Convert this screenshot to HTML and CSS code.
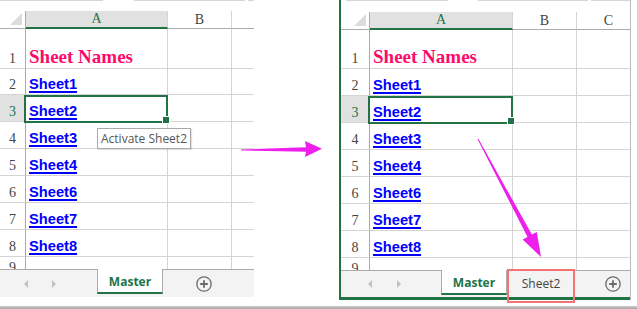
FILE: index.html
```html
<!DOCTYPE html>
<html lang="en">
<head>
    <meta charset="UTF-8">
    <title>Activate sheet from hyperlink</title>
    <link rel="stylesheet" href="styles.css">
</head>
<body>
    <div class="stage">
        <!-- before: hovering the link in Master -->
        <div class="book book-left">
            <div class="topline">
                <span class="seg seg-1"></span><span class="seg seg-2"></span><span class="seg seg-3"></span>
            </div>
            <div class="grid">
                <div class="corner"><span class="tri"></span></div>
                <div class="colhead sel">A</div>
                <div class="colhead">B</div>
                <div class="colhead"></div>

                <div class="rh">1</div><div class="c"><span class="title">Sheet Names</span></div><div class="c"></div><div class="c"></div>
                <div class="rh">2</div><div class="c"><span class="link">Sheet1</span></div><div class="c"></div><div class="c"></div>
                <div class="rh sel">3</div><div class="c sel-cell"><span class="link">Sheet2</span></div><div class="c"></div><div class="c"></div>
                <div class="rh">4</div><div class="c"><span class="link">Sheet3</span></div><div class="c"></div><div class="c"></div>
                <div class="rh">5</div><div class="c"><span class="link">Sheet4</span></div><div class="c"></div><div class="c"></div>
                <div class="rh">6</div><div class="c"><span class="link">Sheet6</span></div><div class="c"></div><div class="c"></div>
                <div class="rh">7</div><div class="c"><span class="link">Sheet7</span></div><div class="c"></div><div class="c"></div>
                <div class="rh">8</div><div class="c"><span class="link">Sheet8</span></div><div class="c"></div><div class="c"></div>
                <div class="rh cut">9</div><div class="c cut"></div><div class="c cut"></div><div class="c cut"></div>
            </div>
            <div class="tabbar">
                <div class="nav">
                    <span class="arr arr-prev"></span><span class="arr arr-next"></span>
                </div>
                <div class="tab tab-master">Master</div>
                <svg class="plus" width="16" height="16" viewBox="0 0 16 16">
                    <circle cx="8" cy="8" r="7.2" fill="none" stroke="#6b6b6b" stroke-width="1.3"/>
                    <path d="M8 4.2v7.6M4.2 8h7.6" stroke="#6b6b6b" stroke-width="1.8"/>
                </svg>
            </div>
            <div class="tooltip">Activate Sheet2</div>
        </div>

        <!-- after: Sheet2 is the active tab -->
        <div class="book book-right">
            <div class="topline">
                <span class="seg seg-1"></span><span class="seg seg-2"></span><span class="seg seg-3"></span>
            </div>
            <div class="grid">
                <div class="corner"><span class="tri"></span></div>
                <div class="colhead sel">A</div>
                <div class="colhead">B</div>
                <div class="colhead">C</div>

                <div class="rh">1</div><div class="c"><span class="title">Sheet Names</span></div><div class="c"></div><div class="c"></div>
                <div class="rh">2</div><div class="c"><span class="link">Sheet1</span></div><div class="c"></div><div class="c"></div>
                <div class="rh sel">3</div><div class="c sel-cell"><span class="link">Sheet2</span></div><div class="c"></div><div class="c"></div>
                <div class="rh">4</div><div class="c"><span class="link">Sheet3</span></div><div class="c"></div><div class="c"></div>
                <div class="rh">5</div><div class="c"><span class="link">Sheet4</span></div><div class="c"></div><div class="c"></div>
                <div class="rh">6</div><div class="c"><span class="link">Sheet6</span></div><div class="c"></div><div class="c"></div>
                <div class="rh">7</div><div class="c"><span class="link">Sheet7</span></div><div class="c"></div><div class="c"></div>
                <div class="rh">8</div><div class="c"><span class="link">Sheet8</span></div><div class="c"></div><div class="c"></div>
                <div class="rh cut">9</div><div class="c cut"></div><div class="c cut"></div><div class="c cut"></div>
            </div>
            <div class="tabbar">
                <div class="nav">
                    <span class="arr arr-prev"></span><span class="arr arr-next"></span>
                </div>
                <div class="tab tab-master">Master</div>
                <div class="tab tab-sheet2">Sheet2</div>
                <svg class="plus" width="16" height="16" viewBox="0 0 16 16">
                    <circle cx="8" cy="8" r="7.2" fill="none" stroke="#6b6b6b" stroke-width="1.3"/>
                    <path d="M8 4.2v7.6M4.2 8h7.6" stroke="#6b6b6b" stroke-width="1.8"/>
                </svg>
            </div>
        </div>
    </div>
    <div class="shadow"></div>

    <svg class="arrows" width="637" height="309" viewBox="0 0 637 309">
        <polygon points="241,149.4 306,147.2 305,141 322,148.8 305,157 306,151.8 241,150.4" fill="#ee1fec"/>
        <polygon points="478.4,138.8 531.9,234.6 536.8,232 541,257 522.6,239.6 527.5,237 477.6,139.2" fill="#ee1fec"/>
    </svg>
</body>
</html>
```

FILE: styles.css
```css
* {
    box-sizing: border-box;
}
body {
    margin: 0;
    width: 637px;
    height: 309px;
    overflow: hidden;
    position: relative;
    background: #fff;
    font-family: "Open Sans", "Liberation Sans", sans-serif;
}
.stage {
    display: flex;
    align-items: flex-start;
    height: 306px;
}
.shadow {
    height: 3px;
    background: linear-gradient(#cdcdcd, #a6a6a6);
}

/* workbook windows */
.book {
    position: relative;
}
.book-left {
    width: 254px;
}
.book-right {
    width: 292px;
    margin-left: 85px;
    border-left: 2px solid #217346;
    border-right: 1px solid #bcbcbc;
}

/* remains of the formula bar */
.topline {
    display: flex;
    height: 11px;
}
.book-right .topline {
    height: 12px;
}
.seg {
    border-top: 1px solid #d6d6d6;
}
.book-left .seg-1 { width: 103px; }
.book-left .seg-2 { width: 111px; margin-left: 31px; }
.book-left .seg-3 { width: 6px; margin-left: 3px; }
.book-right .seg-1 { width: 102px; margin-left: 5px; }
.book-right .seg-2 { width: 110px; margin-left: 30px; }
.book-right .seg-3 { width: 39px; margin-left: 3px; }

/* cells */
.grid {
    display: grid;
    overflow: hidden;
}
.book-left .grid {
    grid-template-columns: 26px 142px 64px 64px;
    grid-template-rows: 18px 40px 26px repeat(6, 27px) 12px;
}
.book-right .grid {
    grid-template-columns: 29px 143px 64px 64px;
    grid-template-rows: 18px 39px repeat(7, 27px) 12px;
}
.corner {
    display: flex;
    align-items: flex-end;
    justify-content: flex-end;
    padding: 0 3px 3px 0;
    border-right: 1px solid #ababab;
    border-bottom: 1px solid #ababab;
}
.tri {
    width: 0;
    height: 0;
    border-left: 12px solid transparent;
    border-bottom: 12px solid #dcdcdc;
}
.colhead {
    display: flex;
    align-items: center;
    justify-content: center;
    border-right: 1px solid #d4d4d4;
    border-bottom: 1px solid #ababab;
    font: 14px "Liberation Serif", serif;
    color: #444;
}
.colhead.sel {
    background: #e1e1e1;
    color: #217346;
    border-bottom: 2px solid #217346;
}
.rh {
    display: flex;
    align-items: flex-end;
    justify-content: center;
    padding-bottom: 1px;
    border-right: 1px solid #ababab;
    border-bottom: 1px solid #d4d4d4;
    font: 14px/16px "Liberation Serif", serif;
    color: #444;
}
.rh.sel {
    background: #e1e1e1;
    color: #217346;
}
.c {
    display: flex;
    align-items: flex-end;
    padding: 0 0 1px 3px;
    border-right: 1px solid #d4d4d4;
    border-bottom: 1px solid #d4d4d4;
    white-space: nowrap;
}
.rh.cut,
.c.cut {
    align-items: flex-start;
    padding-top: 3px;
    border-bottom: none;
    overflow: hidden;
}
.title {
    font: bold 19px/20px "Liberation Serif", serif;
    color: #ff0a6c;
}
.link {
    font: bold 14.67px/17px "Liberation Sans", Arial, sans-serif;
    color: #0000ff;
    text-decoration: underline;
    text-decoration-thickness: 2px;
    text-underline-offset: 2px;
}
.sel-cell {
    position: relative;
}
.sel-cell::before {
    content: "";
    position: absolute;
    left: -2px;
    top: 0;
    right: -1px;
    bottom: -2px;
    border: 2px solid #217346;
}
.sel-cell::after {
    content: "";
    position: absolute;
    right: -3px;
    bottom: -3px;
    width: 6px;
    height: 6px;
    background: #217346;
    border: 1px solid #fff;
}

/* sheet tabs */
.tabbar {
    display: flex;
    align-items: flex-start;
    height: 28px;
    border-top: 1px solid #ababab;
    background: #f3f3f3;
}
.book-right .tabbar {
    height: 30px;
    border-bottom: 3px solid #217346;
}
.nav {
    display: flex;
    align-items: center;
    height: 100%;
    width: 97px;
    padding-left: 24px;
    gap: 24px;
}
.book-right .nav {
    width: 100px;
    padding-left: 27px;
    gap: 25px;
}
.arr {
    width: 0;
    height: 0;
    border-top: 4px solid transparent;
    border-bottom: 4px solid transparent;
}
.arr-prev {
    border-right: 4px solid #c2c2c2;
}
.arr-next {
    border-left: 4px solid #c2c2c2;
}
.tab {
    height: 25px;
    margin-top: -1px;
    padding-top: 5px;
    text-align: center;
    font-size: 12px;
    line-height: 16px;
    color: #444;
}
.tab-master {
    width: 66px;
    background: #fff;
    border-left: 1px solid #ababab;
    border-right: 1px solid #ababab;
    border-bottom: 2px solid #217346;
    font-weight: bold;
    color: #217346;
}
.tab-sheet2 {
    width: 68px;
    position: relative;
    padding-top: 6px;
}
.tab-sheet2::after {
    content: "";
    position: absolute;
    left: 0;
    right: 0;
    top: -1px;
    height: 30px;
    border: 2px solid #f47474;
}
.plus {
    align-self: center;
    margin-left: 33px;
}
.book-right .plus {
    margin-left: 30px;
}

/* hover tip on the link */
.tooltip {
    position: absolute;
    left: 97px;
    top: 128px;
    height: 21px;
    padding: 0 3px;
    border: 1px solid #a9a9a9;
    background: #fff;
    box-shadow: 1px 1px 1px rgba(0, 0, 0, 0.12);
    font-size: 12px;
    line-height: 19px;
    color: #575757;
    white-space: nowrap;
}

.arrows {
    position: absolute;
    left: 0;
    top: 0;
    pointer-events: none;
}
```
